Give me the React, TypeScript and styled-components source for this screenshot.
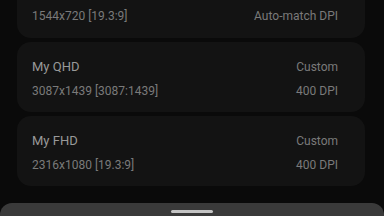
import React from 'react'
import styled, { createGlobalStyle } from 'styled-components'

const GlobalStyle = createGlobalStyle`
  html, body {
    margin: 0;
    padding: 0;
    background-color: #0a0a0a;
  }

  body {
    font-family: Roboto, "Noto Sans", "Liberation Sans", sans-serif;
  }
`

const Screen = styled.div`
  display: flex;
  flex-direction: column;
  width: 384px;
  height: 216px;
  overflow: hidden;
  background-color: #0a0a0a;
`

const List = styled.div`
  flex: 1;
  display: flex;
  flex-direction: column;
  gap: 4px;
  padding: 0px 19px 0px 17px;
  overflow: hidden;
`

// the list is scrolled, so the first card only shows its lower half
const Card = styled.div<{ $scrolledOff?: boolean }>`
  display: flex;
  flex-direction: column;
  gap: 8px;
  flex-shrink: 0;
  height: ${(p) => (p.$scrolledOff ? '38px' : '70px')};
  box-sizing: border-box;
  padding: ${(p) => (p.$scrolledOff ? '8px' : '17px')} 27px 0px 15px;
  border-radius: ${(p) => (p.$scrolledOff ? '0px 0px 14px 14px' : '14px')};
  background-color: #131313;
`

const Row = styled.div`
  display: flex;
  align-items: center;
  justify-content: space-between;
  height: 16px;
`

const Label = styled.span<{ $primary?: boolean }>`
  font-size: ${(p) => (p.$primary ? '13px' : '12px')};
  line-height: 16px;
  color: ${(p) => (p.$primary ? '#999999' : '#7a7a7a')};
  white-space: nowrap;
`

const Sheet = styled.div`
  display: flex;
  justify-content: center;
  flex-shrink: 0;
  height: 13px;
  box-sizing: border-box;
  padding-top: 7px;
  border-radius: 12px 12px 0px 0px;
  background-color: #3a3a3a;
`

const Handle = styled.div`
  width: 42px;
  height: 3px;
  border-radius: 2px;
  background-color: #c4c4c4;
`

interface Resolution {
  name: string
  size: string
  mode: string
  dpi: string
}

const resolutions: Resolution[] = [
  { name: 'HD+', size: '1544x720 [19.3:9]', mode: 'Standard', dpi: 'Auto-match DPI' },
  { name: 'My QHD', size: '3087x1439 [3087:1439]', mode: 'Custom', dpi: '400 DPI' },
  { name: 'My FHD', size: '2316x1080 [19.3:9]', mode: 'Custom', dpi: '400 DPI' },
]

const App: React.FC = () => (
  <Screen>
    <GlobalStyle />
    <List>
      {resolutions.map((r, i) => (
        <Card key={r.name} $scrolledOff={i === 0}>
          {i > 0 && (
            <Row>
              <Label $primary>{r.name}</Label>
              <Label>{r.mode}</Label>
            </Row>
          )}
          <Row>
            <Label>{r.size}</Label>
            <Label>{r.dpi}</Label>
          </Row>
        </Card>
      ))}
    </List>
    <Sheet>
      <Handle />
    </Sheet>
  </Screen>
)

export default App
